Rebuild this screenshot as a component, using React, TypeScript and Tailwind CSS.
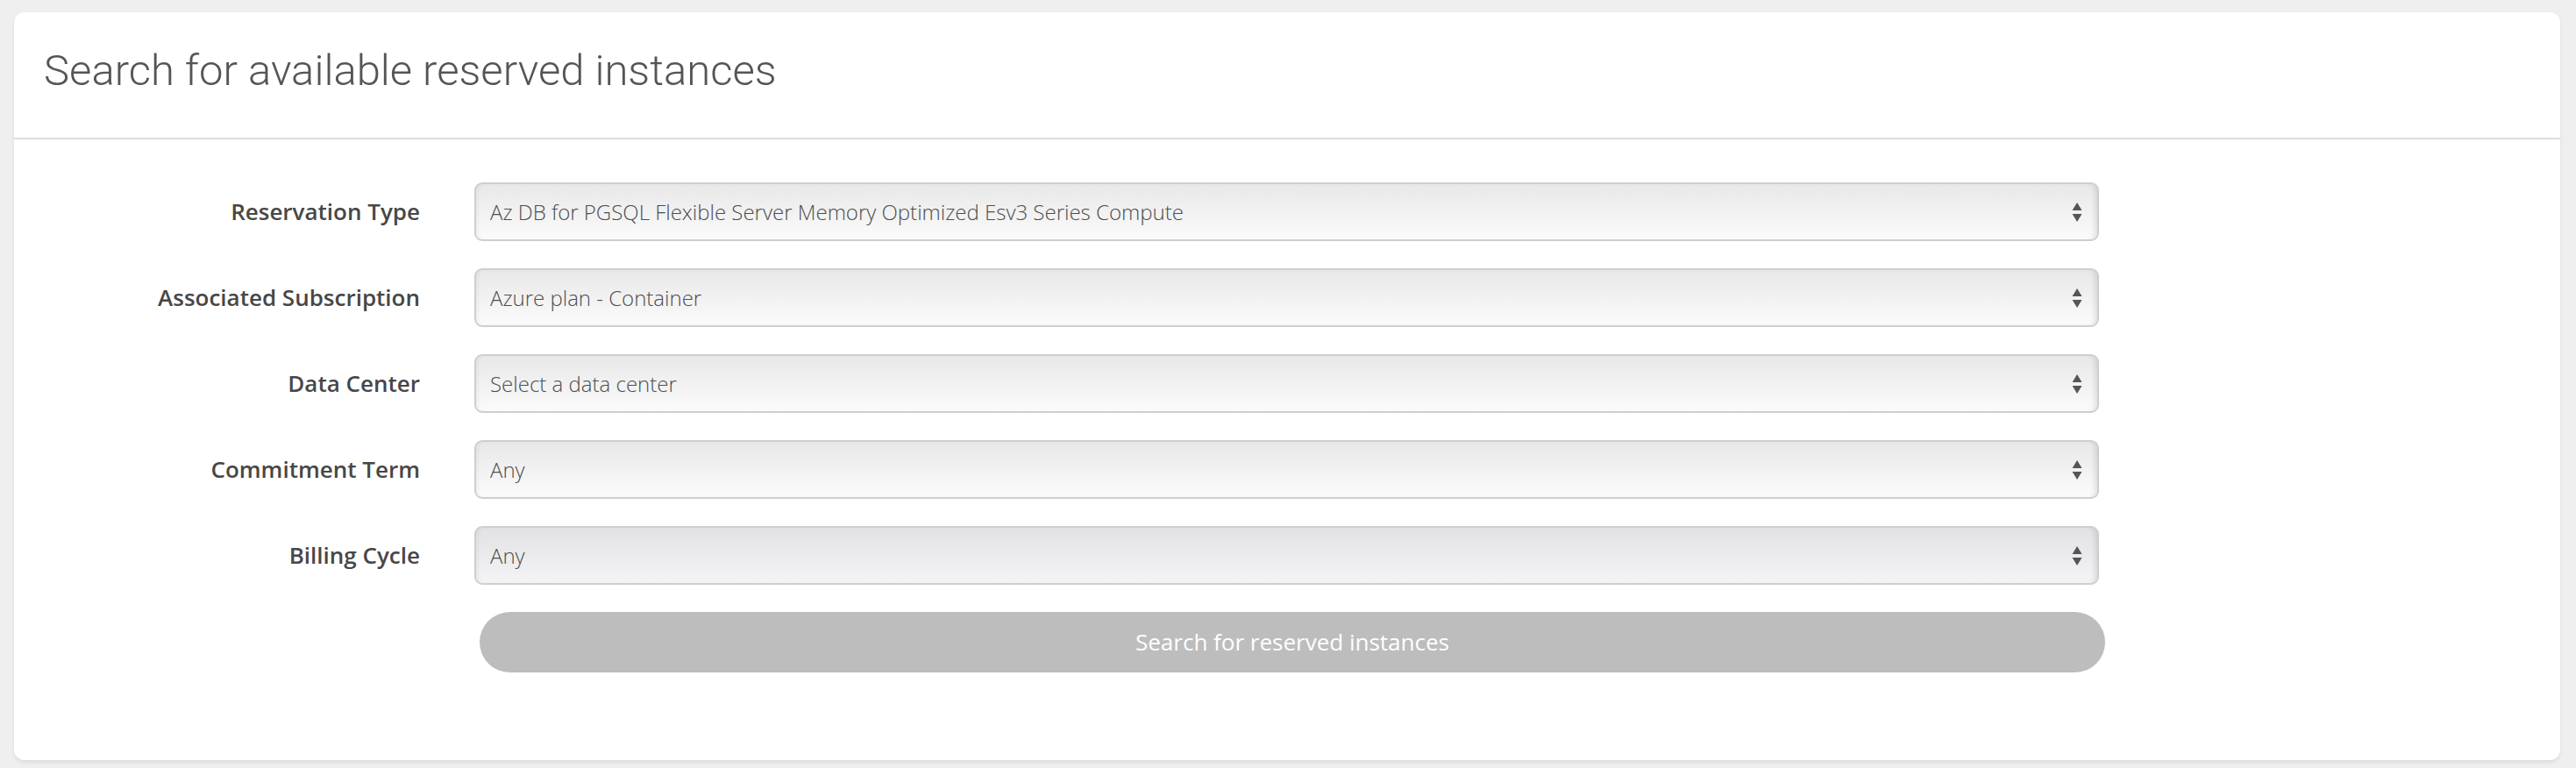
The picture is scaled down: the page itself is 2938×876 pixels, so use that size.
import React from "react";

const fields = [
  { label: "Reservation Type", value: "Az DB for PGSQL Flexible Server Memory Optimized Esv3 Series Compute" },
  { label: "Associated Subscription", value: "Azure plan - Container" },
  { label: "Data Center", value: "Select a data center" },
  { label: "Commitment Term", value: "Any" },
  { label: "Billing Cycle", value: "Any", active: true },
];

function SelectArrows() {
  return (
    <svg width="12" height="24" viewBox="0 0 12 24" className="shrink-0">
      <path d="M6 1 L11.5 10 L0.5 10 Z" fill="#555" />
      <path d="M0.5 14 L11.5 14 L6 23 Z" fill="#555" />
    </svg>
  );
}

function FakeSelect({ value, active }: { value: string; active?: boolean }) {
  return (
    <div
      className={
        active
          ? "flex h-[67px] w-[1853px] items-center justify-between rounded-[9px] border-2 border-[#cfcfcf] bg-gradient-to-b from-[#e2e2e4] to-[#f4f4f6] pl-[16px] pr-[17px] shadow-[inset_-6px_0_6px_-4px_rgba(0,0,0,0.12),inset_6px_0_6px_-5px_rgba(0,0,0,0.06)]"
          : "flex h-[67px] w-[1853px] items-center justify-between rounded-[9px] border-2 border-[#cfcfcf] bg-gradient-to-b from-[#e8e8e8] to-[#fbfbfb] pl-[16px] pr-[17px] shadow-[inset_-6px_0_6px_-4px_rgba(0,0,0,0.12),inset_6px_0_6px_-5px_rgba(0,0,0,0.06)]"
      }
    >
      <span className="text-[24px] font-light text-[#4d4d4d]">{value}</span>
      <SelectArrows />
    </div>
  );
}

export default function App() {
  return (
    <div className="min-h-[876px] w-[2938px] bg-[#efefef] pl-[16px] pr-[18px] pt-[14px] font-['Open_Sans',sans-serif]">
      <div className="h-[853px] rounded-[12px] bg-white shadow-[0_3px_4px_rgba(0,0,0,0.08)]">
        {/* header */}
        <div className="flex h-[145px] items-center border-b-2 border-[#dddddd] pl-[34px] pb-[10px]">
          <h1 className="font-['Roboto',sans-serif] text-[49px] font-light text-[#555]">
            Search for available reserved instances
          </h1>
        </div>

        {/* form */}
        <div className="flex flex-col gap-[31px] pt-[49px]">
          {fields.map((f) => (
            <div key={f.label} className="flex items-center">
              <label className="w-[525px] shrink-0 pr-[62px] text-right text-[26px] font-semibold text-[#474747]">
                {f.label}
              </label>
              <FakeSelect value={f.value} active={f.active} />
            </div>
          ))}
          <div className="flex pl-[531px]">
            <button className="flex h-[69px] w-[1854px] items-center justify-center rounded-full bg-[#bdbdbd] text-[26px] font-normal text-white">
              Search for reserved instances
            </button>
          </div>
        </div>
      </div>
    </div>
  );
}
